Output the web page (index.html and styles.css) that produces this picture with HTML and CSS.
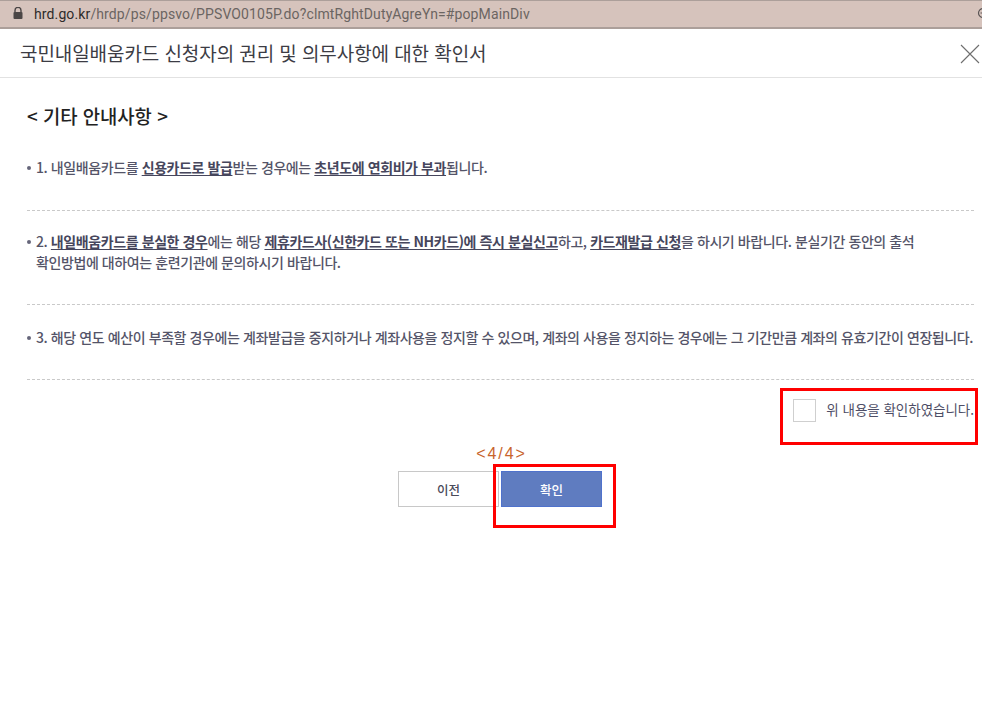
FILE: index.html
```html
<!DOCTYPE html>
<html lang="ko">
<head>
<meta charset="utf-8">
<title>국민내일배움카드 신청자의 권리 및 의무사항에 대한 확인서</title>
<link rel="stylesheet" href="styles.css">
</head>
<body>
<div class="urlbar">
  <svg class="lock" width="10" height="12" viewBox="0 0 10 12"><path d="M2 5V3.4a3 3 0 0 1 6 0V5" fill="none" stroke="#4b4646" stroke-width="1.4"/><rect x="0.5" y="5" width="9" height="7" rx="1" fill="#4b4646"/></svg>
  <span class="url"><span class="host">hrd.go.kr</span>/hrdp/ps/ppsvo/PPSVO0105P.do?clmtRghtDutyAgreYn=#popMainDiv</span>
  <svg class="zoom-icon" width="10" height="12" viewBox="0 0 10 12"><circle cx="6" cy="6" r="4.5" fill="none" stroke="#5a5555" stroke-width="1.2"/><path d="M3.5 6h5" stroke="#5a5555" stroke-width="1.2"/></svg>
</div>
<header class="pop-head">
  <h1 class="pop-title">국민내일배움카드 신청자의 권리 및 의무사항에 대한 확인서</h1>
  <svg class="close" width="20" height="20" viewBox="0 0 20 20"><path d="M1 1l18 18M19 1L1 19" stroke="#6e6e6e" stroke-width="1.1" fill="none"/></svg>
</header>
<main class="content">
  <h2 class="sec-title">&lt; 기타 안내사항 &gt;</h2>
  <div class="item item-1">
    <p class="note">1. 내일배움카드를 <b>신용카드로 발급</b>받는 경우에는 <b>초년도에 연회비가 부과</b>됩니다.</p>
  </div>
  <div class="item item-2">
    <p class="note">2. <b>내일배움카드를 분실한 경우</b>에는 해당 <b>제휴카드사(신한카드 또는 NH카드)에 즉시 분실신고</b>하고, <b>카드재발급 신청</b>을 하시기 바랍니다. 분실기간 동안의 출석<br>확인방법에 대하여는 훈련기관에 문의하시기 바랍니다.</p>
  </div>
  <div class="item item-3">
    <p class="note">3. 해당 연도 예산이 부족할 경우에는 계좌발급을 중지하거나 계좌사용을 정지할 수 있으며, 계좌의 사용을 정지하는 경우에는 그 기간만큼 계좌의 유효기간이 연장됩니다.</p>
  </div>
  <div class="agree">
    <label class="agree-label"><span class="check"></span><span class="agree-text">위 내용을 확인하였습니다.</span></label>
    <span class="mark mark-agree"></span>
  </div>
  <div class="pager">&lt; 4 / 4 &gt;</div>
  <div class="buttons">
    <button class="btn btn-prev" type="button">이전</button>
    <button class="btn btn-ok" type="button">확인</button>
    <span class="mark mark-ok"></span>
  </div>
</main>
</body>
</html>
```

FILE: styles.css
```css
html, body { margin: 0; padding: 0; }
body {
  width: 982px;
  height: 709px;
  overflow: hidden;
  background: #fff;
  font-family: "Noto Sans CJK KR", "Noto Sans", sans-serif;
  color: #4a4a5a;
}
.urlbar {
  box-sizing: border-box;
  height: 29px;
  background: #d6c3bc;
  border-top: 1px solid #ac9f9a;
  border-bottom: 2px solid #ac9f9a;
  display: flex;
  align-items: center;
  padding-left: 13px;
  position: relative;
}
.lock { flex: none; margin-top: -2px; }
.url {
  margin-left: 11px;
  font-family: "Roboto", "Liberation Sans", sans-serif;
  font-size: 14px;
  letter-spacing: 0.12px;
  color: #6b6562;
  margin-top: -1px;
  white-space: nowrap;
}
.host { color: #2e2b2a; }
.zoom-icon { margin-left: auto; margin-right: -5px; flex: none; margin-top: -2px; }
.pop-head {
  box-sizing: border-box;
  height: 49px;
  border-bottom: 1px solid #e2e2e2;
  display: flex;
  align-items: center;
  justify-content: space-between;
  padding: 0 3px 0 20px;
}
.pop-title {
  margin: -2px 0 0;
  font-size: 19px;
  font-weight: 400;
  color: #3c3c44;
  letter-spacing: -0.08px;
  white-space: nowrap;
}
.close { flex: none; margin-right: -1px; margin-top: 2px; }
.content { padding: 0 8px 0 27px; }
.sec-title {
  margin: 25px 0 0;
  height: 26px;
  line-height: 26px;
  font-size: 18.8px;
  font-weight: 500;
  color: #222;
}
.item { border-bottom: 1px dashed #c9c9c9; }
.item-1 { margin-top: 28px; height: 53px; }
.item-2 { margin-top: 20px; height: 73px; }
.item-3 { margin-top: 22px; height: 52px; }
.note {
  margin: 0;
  padding-left: 9px;
  font-size: 14px;
  line-height: 21px;
  letter-spacing: -0.41px;
  font-weight: 500;
  color: #545468;
  white-space: nowrap;
  position: relative;
}
.note::before {
  content: "";
  position: absolute;
  left: 0;
  top: 9px;
  width: 4px;
  height: 4px;
  border-radius: 50%;
  background: #66667a;
}
.note b {
  font-weight: 700;
  color: #46465c;
  text-decoration: underline;
  text-underline-offset: 2px;
}
.agree {
  position: relative;
  display: flex;
  justify-content: flex-end;
  height: 60px;
  padding-top: 19px;
  box-sizing: border-box;
}
.agree-label { display: flex; align-items: flex-start; }
.check {
  box-sizing: border-box;
  width: 23px;
  height: 23px;
  border: 1px solid #cfcfcf;
  background: #fff;
  margin-right: 10px;
}
.agree-text {
  font-size: 13.5px;
  line-height: 20px;
  letter-spacing: -0.02px;
  color: #4e4e66;
  white-space: nowrap;
}
.pager {
  margin-left: -27px;
  width: 982px;
  margin-top: 5px;
  box-sizing: border-box;
  padding-left: 19px;
  text-align: center;
  font-family: "Liberation Sans", sans-serif;
  font-size: 16px;
  line-height: 18px;
  word-spacing: -2.5px;
  color: #c8642c;
}
.buttons {
  position: relative;
  display: flex;
  margin-left: 371px;
  margin-top: 8px;
}
.btn {
  box-sizing: border-box;
  height: 36px;
  font-family: inherit;
  font-size: 12.5px;
  font-weight: 500;
  padding: 0;
  border-radius: 0;
  cursor: pointer;
}
.btn-prev {
  width: 101px;
  background: #fff;
  border: 1px solid #c8c8c8;
  color: #4a4a5a;
}
.btn-ok {
  width: 101px;
  margin-left: 2px;
  background: #5f7cc0;
  border: 1px solid #4f72cc;
  color: #fff;
}
.mark {
  position: absolute;
  box-sizing: border-box;
  border: 3px solid #ff0000;
  pointer-events: none;
}
.mark-agree { left: 753px; top: 8px; width: 198px; height: 57px; }
.mark-ok { left: 95px; top: -7px; width: 123px; height: 64px; }
```
